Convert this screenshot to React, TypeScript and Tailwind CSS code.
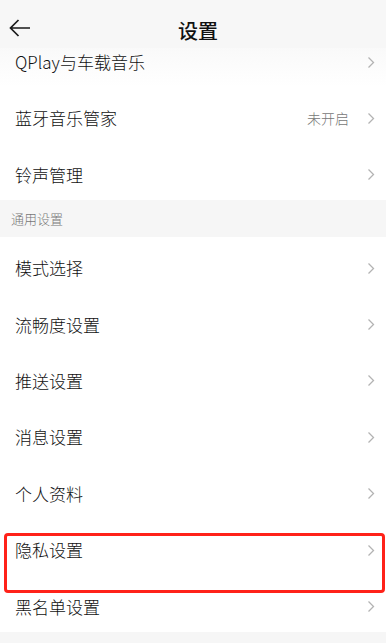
const GENERAL = ['模式选择', '流畅度设置', '推送设置', '消息设置', '个人资料', '隐私设置', '黑名单设置'];

function Chevron() {
    return (
        <svg width="8" height="13" viewBox="0 0 8 13" fill="none" className="shrink-0">
            <path d="M1.5 1.5L6.5 6.5L1.5 11.5" stroke="#b3b3b3" strokeWidth="1.3" />
        </svg>
    );
}

function Row({ label, value, highlight }: { label: string; value?: string; highlight?: boolean }) {
    return (
        <div className="relative flex h-[56.4px] items-start bg-white pt-[19px] pl-[15px] pr-[11px]">
            <span className="flex-1 text-[17px] leading-6 font-light text-[#111]">{label}</span>
            {value && <span className="mr-[18px] text-[14px] leading-6 font-light text-[#777]">{value}</span>}
            <div className="flex h-6 items-center">
                <Chevron />
            </div>
            {highlight && (
                <div className="absolute top-[14px] left-[4px] right-[1px] z-10 h-[60px] rounded-[4px] border-[3px] border-[#ff2219]" />
            )}
        </div>
    );
}

export default function App() {
    return (
        <div
            className="h-[643px] w-[386px] overflow-hidden bg-white"
            style={{ fontFamily: '"Noto Sans CJK SC", "Noto Sans", sans-serif' }}
        >
            <div className="relative z-20 flex h-[48px] items-start bg-[#f7f7f7] pt-[18px]">
                <svg width="24" height="20" viewBox="0 0 24 20" fill="none" className="ml-[8px]">
                    <path d="M22 10H2.5M10.5 2L2.5 10L10.5 18" stroke="#1a1a1a" strokeWidth="1.7" />
                </svg>
                <h1 className="absolute top-[17px] left-0 right-0 text-center text-[20px] leading-7 font-medium text-[#111] pl-[10px]">
                    设置
                </h1>
            </div>
            <div className="-mt-[17px]">
                <div className="flex h-[56.4px] items-start bg-gradient-to-b from-[#f7f7f7] via-[#fbfbfb] to-white pt-[19px] pl-[15px] pr-[11px]">
                    <span className="flex-1 text-[17px] leading-6 font-light text-[#111]">QPlay与车载音乐</span>
                    <div className="flex h-6 items-center">
                        <Chevron />
                    </div>
                </div>
                <Row label="蓝牙音乐管家" value="未开启" />
                <Row label="铃声管理" />
                <div className="flex h-[37px] items-center bg-[#f6f6f6] pl-[11px] text-[13px] font-light text-[#777]">通用设置</div>
                {GENERAL.map((label) => (
                    <Row key={label} label={label} highlight={label === '隐私设置'} />
                ))}
                <div className="h-[20px] bg-[#f6f6f6]" />
            </div>
        </div>
    );
}
